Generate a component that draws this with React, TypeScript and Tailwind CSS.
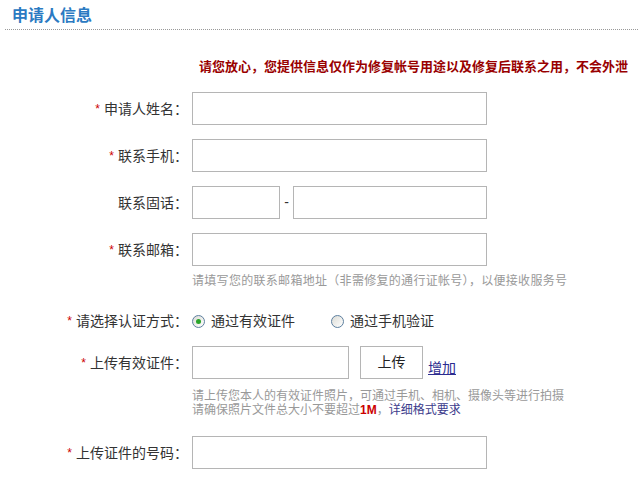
import React from 'react';

const FONT = '"Liberation Sans", "Noto Sans CJK SC", sans-serif';

function Label({ text, required = true }: { text: string; required?: boolean }) {
  return (
    <div className="w-[188px] shrink-0 flex items-center justify-end text-[14px] leading-[20px] text-[#333]">
      {required && <span className="text-[12px] text-[#c00] mr-[4px] leading-none">*</span>}
      <span>{text}</span>
    </div>
  );
}

function Input({ className = 'w-[295px]' }: { className?: string }) {
  return <div className={`h-[33px] border border-[#b5b5b5] bg-white ${className}`} />;
}

function Radio({ checked }: { checked?: boolean }) {
  return (
    <span className="w-[13px] h-[13px] rounded-full border border-[#5d7f9f] bg-gradient-to-br from-[#dcdcd6] to-white flex items-center justify-center">
      {checked && <span className="w-[5px] h-[5px] rounded-full bg-[#2aa52a]" />}
    </span>
  );
}

export default function App() {
  return (
    <div className="w-[638px] h-[477px] bg-white overflow-hidden" style={{ fontFamily: FONT }}>
      <div className="ml-[5px] h-[30px] pt-[2px] flex items-center border-b border-dotted border-[#999]">
        <h2 className="pl-[7px] text-[16px] font-bold text-[#2b7ac2] leading-[16px]">申请人信息</h2>
      </div>

      <p className="mt-[29px] pr-[10px] text-right text-[13px] font-bold leading-[16px] text-[#990000]">
        请您放心，您提供信息仅作为修复帐号用途以及修复后联系之用，不会外泄
      </p>

      <div className="mt-[17px] flex items-center gap-[4px]">
        <Label text="申请人姓名：" />
        <Input />
      </div>

      <div className="mt-[14px] flex items-center gap-[4px]">
        <Label text="联系手机：" />
        <Input />
      </div>

      <div className="mt-[14px] flex items-center gap-[4px]">
        <Label text="联系固话：" required={false} />
        <Input className="w-[88px]" />
        <span className="w-[5px] text-center text-[14px] text-[#333]">-</span>
        <Input className="w-[194px]" />
      </div>

      <div className="mt-[14px] flex items-center gap-[4px]">
        <Label text="联系邮箱：" />
        <Input />
      </div>
      <p className="mt-[7px] pl-[192px] text-[12px] leading-[16px] tracking-[0.3px] text-[#999]">
        请填写您的联系邮箱地址（非需修复的通行证帐号），以便接收服务号
      </p>

      <div className="mt-[22px] flex items-center gap-[4px]">
        <Label text="请选择认证方式：" />
        <div className="flex items-center text-[14px] leading-[20px] text-[#333]">
          <Radio checked />
          <span className="ml-[6px]">通过有效证件</span>
          <span className="ml-[36px]">
            <Radio />
          </span>
          <span className="ml-[6px]">通过手机验证</span>
        </div>
      </div>

      <div className="mt-[15px] flex items-center gap-[4px]">
        <Label text="上传有效证件：" />
        <Input className="w-[157px]" />
        <button className="ml-[7px] w-[63px] h-[33px] border border-[#b5b5b5] bg-white text-[14px] text-[#222]">
          上传
        </button>
        <a className="mt-[10px] ml-[1px] text-[14px] leading-[16px] text-[#2b2b8f] underline">增加</a>
      </div>
      <div className="mt-[10px] pl-[192px] text-[12px] leading-[14px] text-[#999]">
        <p>请上传您本人的有效证件照片，可通过手机、相机、摄像头等进行拍摄</p>
        <p>
          请确保照片文件总大小不要超过<span className="font-bold text-[#cc0000]">1M</span>，
          <span className="text-[#3c3c8c]">详细格式要求</span>
        </p>
      </div>

      <div className="mt-[19px] flex items-center gap-[4px]">
        <Label text="上传证件的号码：" />
        <Input />
      </div>
    </div>
  );
}
